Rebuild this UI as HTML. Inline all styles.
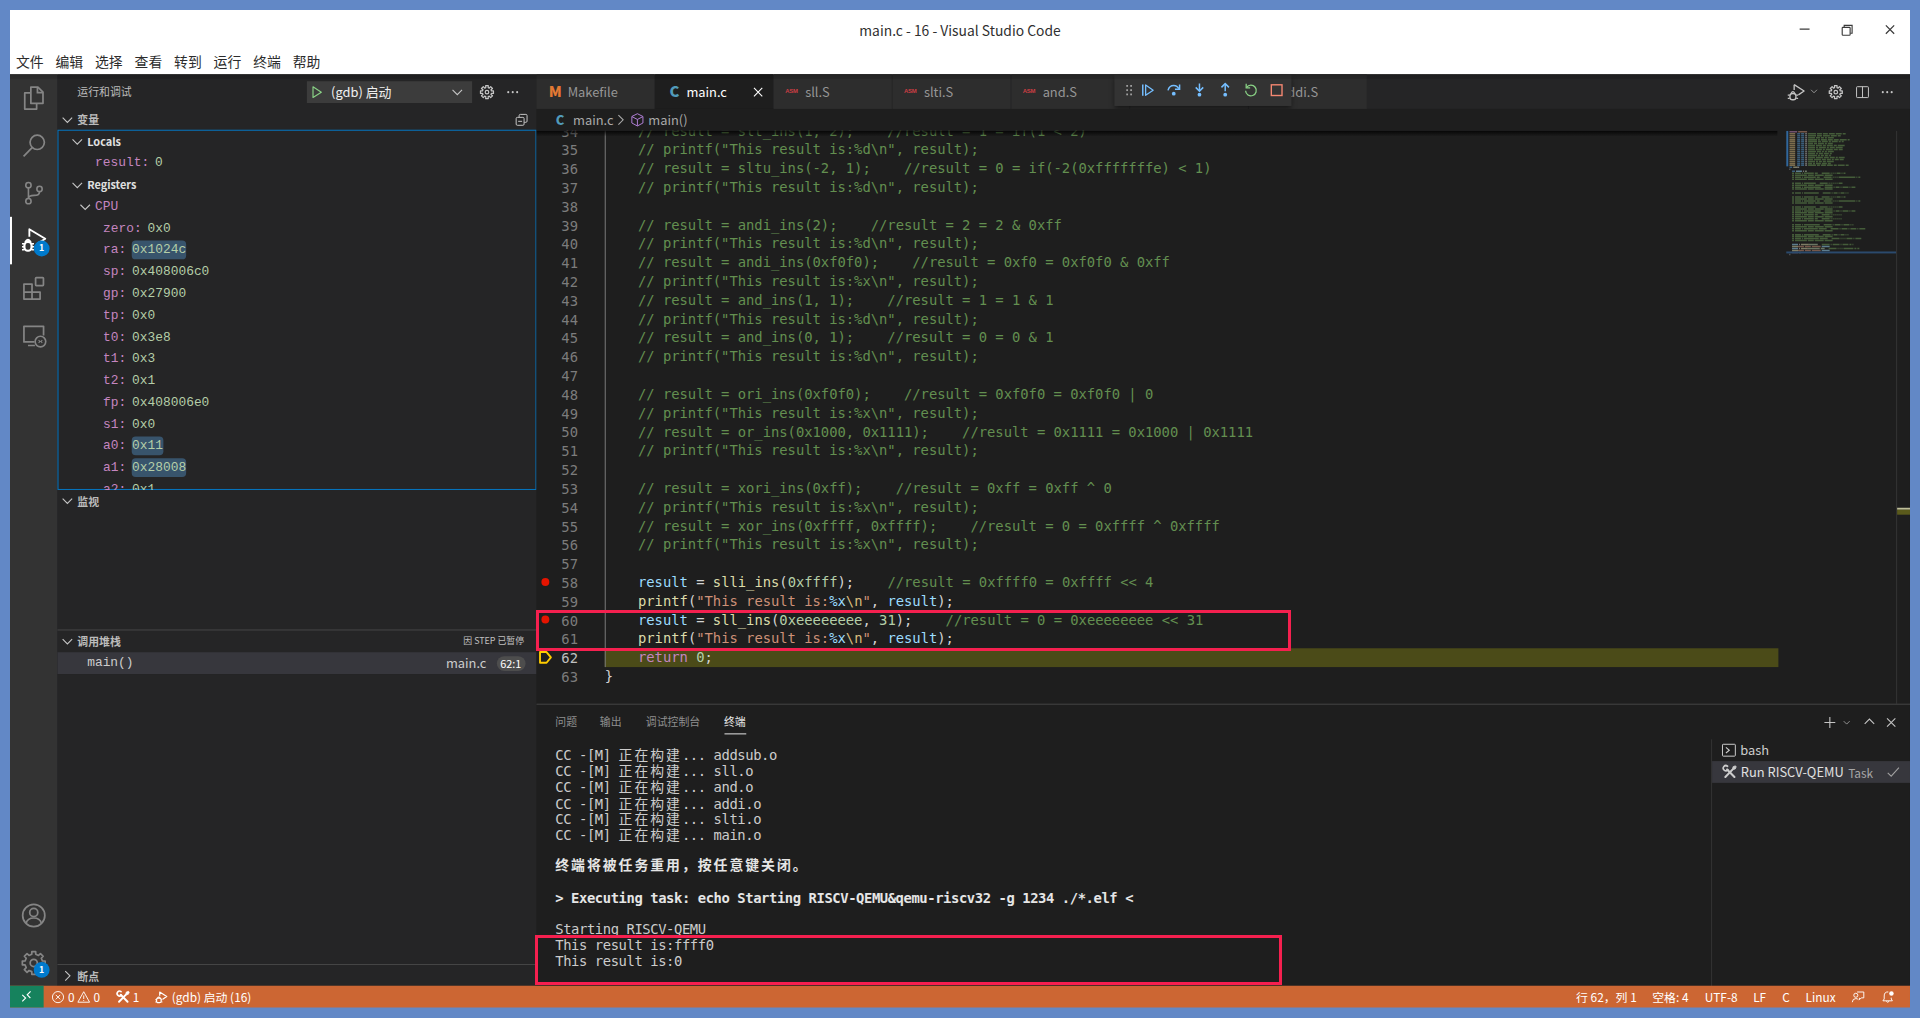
<!DOCTYPE html>
<html lang="zh-CN"><head><meta charset="utf-8"><title>main.c - 16 - Visual Studio Code</title>
<style>
html,body{margin:0;padding:0}
body{width:1920px;height:1018px;overflow:hidden;position:relative;background:#6288c6;font-family:'Noto Sans CJK SC','Liberation Sans',sans-serif}
#win{position:absolute;left:10px;top:10px;width:1920px;height:1008.3px;transform:scale(0.989583);transform-origin:0 0;overflow:hidden}
#win div{box-sizing:border-box}
.rr{position:absolute;border:3px solid #f5204f;box-sizing:border-box}
</style></head>
<body>
<div id="win">
<div style="position:absolute;left:0px;top:30px;width:1920px;height:970px;background:#252526;"></div>
<div style="position:absolute;left:0px;top:0px;width:1920px;height:65px;background:#ffffff;"></div>
<div style="position:absolute;left:0;top:0;width:1920px;height:40px;text-align:center;font:14px/40px 'Noto Sans CJK SC','Liberation Sans',sans-serif;color:#303030">main.c - 16 - Visual Studio Code</div>
<svg width="120" height="40" viewBox="0 0 120 40" style="position:absolute;left:1800px;top:0" fill="none" stroke="#3a3a3a" stroke-width="1.15"><path d="M8.5 19.3 H18.5"/><rect x="51.5" y="17.5" width="8" height="8" rx="0.8"/><path d="M53.5 17.3 V15.5 H61.5 V23.5 H59.7"/><path d="M95.6 15.6 L104 24 M104 15.6 L95.6 24" stroke-width="1.25"/></svg>
<div style="position:absolute;left:6.0px;top:40.4px;font:14px/25px 'Noto Sans CJK SC','Liberation Sans',sans-serif;color:#2c2c2c;white-space:pre;">文件</div>
<div style="position:absolute;left:45.95px;top:40.4px;font:14px/25px 'Noto Sans CJK SC','Liberation Sans',sans-serif;color:#2c2c2c;white-space:pre;">编辑</div>
<div style="position:absolute;left:85.9px;top:40.4px;font:14px/25px 'Noto Sans CJK SC','Liberation Sans',sans-serif;color:#2c2c2c;white-space:pre;">选择</div>
<div style="position:absolute;left:125.85000000000001px;top:40.4px;font:14px/25px 'Noto Sans CJK SC','Liberation Sans',sans-serif;color:#2c2c2c;white-space:pre;">查看</div>
<div style="position:absolute;left:165.8px;top:40.4px;font:14px/25px 'Noto Sans CJK SC','Liberation Sans',sans-serif;color:#2c2c2c;white-space:pre;">转到</div>
<div style="position:absolute;left:205.75px;top:40.4px;font:14px/25px 'Noto Sans CJK SC','Liberation Sans',sans-serif;color:#2c2c2c;white-space:pre;">运行</div>
<div style="position:absolute;left:245.70000000000002px;top:40.4px;font:14px/25px 'Noto Sans CJK SC','Liberation Sans',sans-serif;color:#2c2c2c;white-space:pre;">终端</div>
<div style="position:absolute;left:285.65000000000003px;top:40.4px;font:14px/25px 'Noto Sans CJK SC','Liberation Sans',sans-serif;color:#2c2c2c;white-space:pre;">帮助</div>
<div style="position:absolute;left:0px;top:65px;width:48px;height:921.5px;background:#333333;"></div>
<svg viewBox="0 0 24 24" width="28" height="28" style="position:absolute;color:#858585;left:10px;top:75px;" fill="none" stroke="currentColor"><path d="M9.5 2.5 H15.6 L20 6.9 V16.5 H9.5 Z" stroke-width="1.5" stroke-linejoin="round"/><path d="M15.2 2.8 V7.3 H19.8" stroke-width="1.5"/><path d="M9.3 7.5 H4.2 V21.5 H14.5 V16.8" stroke-width="1.5" stroke-linejoin="round"/></svg>
<svg viewBox="0 0 24 24" width="28" height="28" style="position:absolute;color:#858585;left:10px;top:123px;" fill="none" stroke="currentColor"><circle cx="15" cy="9.2" r="6.2" stroke-width="1.5"/><path d="M10.6 13.8 L3.2 21.4" stroke-width="1.5"/></svg>
<svg viewBox="0 0 24 24" width="28" height="28" style="position:absolute;color:#858585;left:10px;top:171px;" fill="none" stroke="currentColor"><circle cx="7.4" cy="5.2" r="2.3" stroke-width="1.4"/><circle cx="7.4" cy="19" r="2.3" stroke-width="1.4"/><circle cx="17" cy="8.4" r="2.3" stroke-width="1.4"/><path d="M7.4 7.6 V16.6 M17 10.8 Q17 14 12.4 14 Q7.6 14 7.4 16.6" stroke-width="1.4"/></svg>
<svg viewBox="0 0 24 24" width="28" height="28" style="position:absolute;color:#ffffff;left:10px;top:219px;" fill="none" stroke="currentColor"><path d="M8.2 8.6 V2.2 L22 10.4 L15 14.8" stroke-width="1.6" stroke-linejoin="round"/><rect x="3.9" y="13.2" width="6.2" height="7.6" rx="2.9" stroke-width="1.9"/><path d="M4.6 13.4 Q7 9.2 9.4 13.4" stroke-width="1.7"/><path d="M1.8 14.8 H3.6 M1.8 17.4 H3.6 M1.8 20 H3.8 M10.4 14.8 H12.2 M10.4 17.4 H12.2 M10.2 20 H12.2" stroke-width="1.2"/></svg>
<svg viewBox="0 0 24 24" width="28" height="28" style="position:absolute;color:#858585;left:10px;top:267px;" fill="none" stroke="currentColor"><path d="M3.5 8.5 H10.5 V15.5 H17.5 V21.5 H3.5 Z M10.5 15.5 V21.5 M3.5 15.5 H10.5" stroke-width="1.5" stroke-linejoin="round"/><rect x="13.6" y="3" width="6.8" height="6.8" rx="0.6" stroke-width="1.5"/></svg>
<svg viewBox="0 0 24 24" width="28" height="28" style="position:absolute;color:#858585;left:10px;top:315px;" fill="none" stroke="currentColor"><path d="M12.6 17.5 H3.5 V4 H20.5 V12" stroke-width="1.5" stroke-linejoin="round"/><path d="M7 20.6 H13" stroke-width="1.5"/><circle cx="17.8" cy="17.2" r="4.6" stroke-width="1.4"/><path d="M16.2 16 L17.4 17.2 L16.2 18.4 M19.4 16 L18.2 17.2 L19.4 18.4" stroke-width="0.9"/></svg>
<div style="position:absolute;left:0px;top:209px;width:2px;height:48px;background:#ffffff;"></div>
<div style="position:absolute;left:24px;top:233px;width:16px;height:16px;background:#007acc;border-radius:8px;color:#fff;font:bold 9px/16px 'Noto Sans CJK SC','Liberation Sans',sans-serif;text-align:center">1</div>
<svg viewBox="0 0 24 24" width="28" height="28" style="position:absolute;color:#858585;left:10px;top:900.8px;" fill="none" stroke="currentColor"><circle cx="12" cy="12" r="9.6" stroke-width="1.5"/><circle cx="12" cy="9.4" r="3.5" stroke-width="1.5"/><path d="M5.4 18.8 Q6.6 14.2 12 14.2 Q17.4 14.2 18.6 18.8" stroke-width="1.5"/></svg>
<svg viewBox="0 0 24 24" width="28" height="28" style="position:absolute;color:#858585;left:10px;top:948.8px;" fill="none" stroke="currentColor"><path d="M21.86 10.36 L21.86 13.64 L19.50 13.74 L18.53 16.07 L20.14 17.81 L17.81 20.14 L16.07 18.53 L13.74 19.50 L13.64 21.86 L10.36 21.86 L10.26 19.50 L7.93 18.53 L6.19 20.14 L3.86 17.81 L5.47 16.07 L4.50 13.74 L2.14 13.64 L2.14 10.36 L4.50 10.26 L5.47 7.93 L3.86 6.19 L6.19 3.86 L7.93 5.47 L10.26 4.50 L10.36 2.14 L13.64 2.14 L13.74 4.50 L16.07 5.47 L17.81 3.86 L20.14 6.19 L18.53 7.93 L19.50 10.26Z" stroke-width="1.5" stroke-linejoin="round"/><circle cx="12" cy="12" r="3.1" stroke-width="1.5"/></svg>
<div style="position:absolute;left:24px;top:962px;width:16px;height:16px;background:#007acc;border-radius:8px;color:#fff;font:bold 9px/16px 'Noto Sans CJK SC','Liberation Sans',sans-serif;text-align:center">1</div>
<div style="position:absolute;left:48px;top:65px;width:483.5px;height:921.5px;background:#252526;"></div>
<div style="position:absolute;left:68px;top:65px;font:11px/35px 'Noto Sans CJK SC','Liberation Sans',sans-serif;color:#bbbbbb;white-space:pre;">运行和调试</div>
<div style="position:absolute;left:300px;top:71.5px;width:167px;height:22px;background:#3c3c3c;"></div>
<svg viewBox="0 0 16 16" width="16" height="16" style="position:absolute;color:#89d185;left:301.5px;top:74.5px;" fill="none" stroke="currentColor"><path d="M4.2 2.6 L12.6 8 L4.2 13.4 Z" stroke-width="1.2" stroke-linejoin="round"/></svg>
<div style="position:absolute;left:324.5px;top:71.5px;font:13px/22px 'Noto Sans CJK SC','Liberation Sans',sans-serif;color:#f0f0f0;white-space:pre;">(gdb) 启动</div>
<svg viewBox="0 0 16 16" width="16" height="16" style="position:absolute;color:#c5c5c5;left:444px;top:74.5px;" fill="none" stroke="currentColor"><path d="M3.2 5.8 L8 10.6 L12.8 5.8" stroke-width="1.1"/></svg>
<svg viewBox="0 0 16 16" width="16" height="16" style="position:absolute;color:#c5c5c5;left:474px;top:74.5px;" fill="none" stroke="currentColor"><path d="M14.57 6.69 L14.57 9.31 L12.54 9.20 L12.06 10.36 L13.57 11.72 L11.72 13.57 L10.36 12.06 L9.20 12.54 L9.31 14.57 L6.69 14.57 L6.80 12.54 L5.64 12.06 L4.28 13.57 L2.43 11.72 L3.94 10.36 L3.46 9.20 L1.43 9.31 L1.43 6.69 L3.46 6.80 L3.94 5.64 L2.43 4.28 L4.28 2.43 L5.64 3.94 L6.80 3.46 L6.69 1.43 L9.31 1.43 L9.20 3.46 L10.36 3.94 L11.72 2.43 L13.57 4.28 L12.06 5.64 L12.54 6.80Z" stroke-width="1.25" stroke-linejoin="round"/><circle cx="8" cy="8" r="1.8" stroke-width="1.25"/></svg>
<svg viewBox="0 0 16 16" width="16" height="16" style="position:absolute;color:#c5c5c5;left:499.5px;top:74.5px;" fill="none" stroke="currentColor"><g fill="currentColor" stroke="none"><circle cx="3.5" cy="8" r="1.05"/><circle cx="8" cy="8" r="1.05"/><circle cx="12.5" cy="8" r="1.05"/></g></svg>
<svg viewBox="0 0 16 16" width="16" height="16" style="position:absolute;color:#c5c5c5;left:50px;top:103px;" fill="none" stroke="currentColor"><path d="M3.2 5.8 L8 10.6 L12.8 5.8" stroke-width="1.1"/></svg><div style="position:absolute;left:68px;top:99px;font:11px/22px 'Noto Sans CJK SC','Liberation Sans',sans-serif;color:#bbbbbb;white-space:pre;font-weight:bold">变量</div>
<svg viewBox="0 0 16 16" width="16" height="16" style="position:absolute;color:#c5c5c5;left:509px;top:103px;" fill="none" stroke="currentColor"><rect x="2.5" y="5.5" width="8" height="8" rx="1.2" stroke-width="1"/><path d="M4.5 9.5 H8.5" stroke-width="1"/><path d="M5.5 5.3 V3.7 Q5.5 2.5 6.7 2.5 H12.3 Q13.5 2.5 13.5 3.7 V9.3 Q13.5 10.5 12.3 10.5 H10.7" stroke-width="1"/></svg>
<div style="position:absolute;left:48px;top:121.2px;width:483.5px;height:363.5px;overflow:hidden;outline:1.6px solid rgba(0,127,212,0.9);outline-offset:-1.3px"><svg viewBox="0 0 16 16" width="16" height="16" style="position:absolute;color:#c5c5c5;left:12px;top:3.8px;" fill="none" stroke="currentColor"><path d="M3.2 5.8 L8 10.6 L12.8 5.8" stroke-width="1.1"/></svg><div style="position:absolute;left:30px;top:-0.3999999999999999px;font:11px/22px 'Noto Sans CJK SC','Liberation Sans',sans-serif;color:#e0e0e0;white-space:pre;font-weight:bold">Locals</div><div style="position:absolute;left:38px;top:22.8px;font:13px/22px 'Liberation Mono','DejaVu Sans Mono',monospace;color:#ccc;white-space:pre;"><span style="color:#c586c0;margin-right:6px">result:</span><span style="color:#b5cea8">0</span></div><svg viewBox="0 0 16 16" width="16" height="16" style="position:absolute;color:#c5c5c5;left:12px;top:47.8px;" fill="none" stroke="currentColor"><path d="M3.2 5.8 L8 10.6 L12.8 5.8" stroke-width="1.1"/></svg><div style="position:absolute;left:30px;top:43.599999999999994px;font:11px/22px 'Noto Sans CJK SC','Liberation Sans',sans-serif;color:#e0e0e0;white-space:pre;font-weight:bold">Registers</div><svg viewBox="0 0 16 16" width="16" height="16" style="position:absolute;color:#c5c5c5;left:20px;top:69.8px;" fill="none" stroke="currentColor"><path d="M3.2 5.8 L8 10.6 L12.8 5.8" stroke-width="1.1"/></svg><div style="position:absolute;left:38px;top:66.8px;font:13px/22px 'Liberation Mono','DejaVu Sans Mono',monospace;color:#c586c0;white-space:pre;">CPU</div><div style="position:absolute;left:46px;top:88.8px;font:13px/22px 'Liberation Mono','DejaVu Sans Mono',monospace;color:#ccc;white-space:pre;"><span style="color:#c586c0;margin-right:6px">zero:</span><span style="color:#b5cea8">0x0</span></div><div style="position:absolute;left:46px;top:110.8px;font:13px/22px 'Liberation Mono','DejaVu Sans Mono',monospace;color:#ccc;white-space:pre;"><span style="color:#c586c0;margin-right:6px">ra:</span><span style="color:#b5cea8;background:rgba(86,156,214,0.4);border-radius:4px;padding:2px 0">0x1024c</span></div><div style="position:absolute;left:46px;top:132.8px;font:13px/22px 'Liberation Mono','DejaVu Sans Mono',monospace;color:#ccc;white-space:pre;"><span style="color:#c586c0;margin-right:6px">sp:</span><span style="color:#b5cea8">0x408006c0</span></div><div style="position:absolute;left:46px;top:154.8px;font:13px/22px 'Liberation Mono','DejaVu Sans Mono',monospace;color:#ccc;white-space:pre;"><span style="color:#c586c0;margin-right:6px">gp:</span><span style="color:#b5cea8">0x27900</span></div><div style="position:absolute;left:46px;top:176.8px;font:13px/22px 'Liberation Mono','DejaVu Sans Mono',monospace;color:#ccc;white-space:pre;"><span style="color:#c586c0;margin-right:6px">tp:</span><span style="color:#b5cea8">0x0</span></div><div style="position:absolute;left:46px;top:198.8px;font:13px/22px 'Liberation Mono','DejaVu Sans Mono',monospace;color:#ccc;white-space:pre;"><span style="color:#c586c0;margin-right:6px">t0:</span><span style="color:#b5cea8">0x3e8</span></div><div style="position:absolute;left:46px;top:220.8px;font:13px/22px 'Liberation Mono','DejaVu Sans Mono',monospace;color:#ccc;white-space:pre;"><span style="color:#c586c0;margin-right:6px">t1:</span><span style="color:#b5cea8">0x3</span></div><div style="position:absolute;left:46px;top:242.8px;font:13px/22px 'Liberation Mono','DejaVu Sans Mono',monospace;color:#ccc;white-space:pre;"><span style="color:#c586c0;margin-right:6px">t2:</span><span style="color:#b5cea8">0x1</span></div><div style="position:absolute;left:46px;top:264.8px;font:13px/22px 'Liberation Mono','DejaVu Sans Mono',monospace;color:#ccc;white-space:pre;"><span style="color:#c586c0;margin-right:6px">fp:</span><span style="color:#b5cea8">0x408006e0</span></div><div style="position:absolute;left:46px;top:286.8px;font:13px/22px 'Liberation Mono','DejaVu Sans Mono',monospace;color:#ccc;white-space:pre;"><span style="color:#c586c0;margin-right:6px">s1:</span><span style="color:#b5cea8">0x0</span></div><div style="position:absolute;left:46px;top:308.8px;font:13px/22px 'Liberation Mono','DejaVu Sans Mono',monospace;color:#ccc;white-space:pre;"><span style="color:#c586c0;margin-right:6px">a0:</span><span style="color:#b5cea8;background:rgba(86,156,214,0.4);border-radius:4px;padding:2px 0">0x11</span></div><div style="position:absolute;left:46px;top:330.8px;font:13px/22px 'Liberation Mono','DejaVu Sans Mono',monospace;color:#ccc;white-space:pre;"><span style="color:#c586c0;margin-right:6px">a1:</span><span style="color:#b5cea8;background:rgba(86,156,214,0.4);border-radius:4px;padding:2px 0">0x28008</span></div><div style="position:absolute;left:46px;top:352.8px;font:13px/22px 'Liberation Mono','DejaVu Sans Mono',monospace;color:#ccc;white-space:pre;"><span style="color:#c586c0;margin-right:6px">a2:</span><span style="color:#b5cea8">0x1</span></div></div>
<svg viewBox="0 0 16 16" width="16" height="16" style="position:absolute;color:#c5c5c5;left:50px;top:488.1px;" fill="none" stroke="currentColor"><path d="M3.2 5.8 L8 10.6 L12.8 5.8" stroke-width="1.1"/></svg><div style="position:absolute;left:68px;top:485.1px;font:11px/22px 'Noto Sans CJK SC','Liberation Sans',sans-serif;color:#bbbbbb;white-space:pre;font-weight:bold">监视</div>
<div style="position:absolute;left:48px;top:625.8px;width:483.5px;height:1px;background:rgba(204,204,204,0.2);"></div><svg viewBox="0 0 16 16" width="16" height="16" style="position:absolute;color:#c5c5c5;left:50px;top:629.5px;" fill="none" stroke="currentColor"><path d="M3.2 5.8 L8 10.6 L12.8 5.8" stroke-width="1.1"/></svg><div style="position:absolute;left:68px;top:626.5px;font:11px/22px 'Noto Sans CJK SC','Liberation Sans',sans-serif;color:#bbbbbb;white-space:pre;font-weight:bold">调用堆栈</div>
<div style="position:absolute;left:458px;top:627.3px;font:9px/22px 'Noto Sans CJK SC','Liberation Sans',sans-serif;color:#c0c0c0;white-space:pre;">因 STEP 已暂停</div>
<div style="position:absolute;left:48px;top:648.5px;width:483.5px;height:22px;background:#37373d;"></div>
<div style="position:absolute;left:78px;top:648.5px;font:13px/22px 'Liberation Mono','DejaVu Sans Mono',monospace;color:#cccccc;white-space:pre;">main()</div>
<div style="position:absolute;left:440.5px;top:648.5px;font:13px/22px 'Noto Sans CJK SC','Liberation Sans',sans-serif;color:#cccccc;white-space:pre;">main.c</div>
<div style="position:absolute;left:491.5px;top:652.5px;width:29px;height:15px;background:#4d4d4d;border-radius:8px;font:11px/15px 'Noto Sans CJK SC','Liberation Sans',sans-serif;color:#fff;text-align:center">62:1</div>
<div style="position:absolute;left:48px;top:963.8px;width:483.5px;height:1px;background:rgba(204,204,204,0.2);"></div><svg viewBox="0 0 16 16" width="16" height="16" style="position:absolute;color:#c5c5c5;left:50px;top:968.0px;" fill="none" stroke="currentColor"><path d="M5.8 3.2 L10.6 8 L5.8 12.8" stroke-width="1.1"/></svg><div style="position:absolute;left:68px;top:965.0px;font:11px/22px 'Noto Sans CJK SC','Liberation Sans',sans-serif;color:#bbbbbb;white-space:pre;font-weight:bold">断点</div>
<div style="position:absolute;left:531.5px;top:65px;width:1388.5px;height:35px;background:#252526;"></div>
<div style="position:absolute;left:531.5px;top:65px;width:119px;height:35px;background:#2d2d2d;"></div>
<div style="position:absolute;left:544.5px;top:65px;font:15px/34px 'Noto Sans CJK SC','Liberation Sans',sans-serif;color:#e37933;white-space:pre;font-weight:900">M</div>
<div style="position:absolute;left:563.5px;top:65px;font:13px/35px 'Noto Sans CJK SC','Liberation Sans',sans-serif;color:#969696;white-space:pre;">Makefile</div>
<div style="position:absolute;left:651.5px;top:65px;width:119px;height:35px;background:#1e1e1e;"></div>
<div style="position:absolute;left:666.5px;top:65px;font:15px/34px 'Noto Sans CJK SC','Liberation Sans',sans-serif;color:#519aba;white-space:pre;font-weight:900">C</div>
<div style="position:absolute;left:683.5px;top:65px;font:13px/35px 'Noto Sans CJK SC','Liberation Sans',sans-serif;color:#ffffff;white-space:pre;">main.c</div>
<svg viewBox="0 0 16 16" width="16" height="16" style="position:absolute;color:#ffffff;left:747.5px;top:75px;" fill="none" stroke="currentColor"><path d="M3.8 3.8 L12.2 12.2 M12.2 3.8 L3.8 12.2" stroke-width="1.1"/></svg>
<div style="position:absolute;left:771.5px;top:65px;width:119px;height:35px;background:#2d2d2d;"></div>
<div style="position:absolute;left:783.5px;top:65px;font:6px/35px 'Liberation Sans',sans-serif;color:#cc3e44;white-space:pre;font-weight:bold;letter-spacing:-0.3px">ASM</div>
<div style="position:absolute;left:803.5px;top:65px;font:13px/35px 'Noto Sans CJK SC','Liberation Sans',sans-serif;color:#969696;white-space:pre;">sll.S</div>
<div style="position:absolute;left:891.5px;top:65px;width:119px;height:35px;background:#2d2d2d;"></div>
<div style="position:absolute;left:903.5px;top:65px;font:6px/35px 'Liberation Sans',sans-serif;color:#cc3e44;white-space:pre;font-weight:bold;letter-spacing:-0.3px">ASM</div>
<div style="position:absolute;left:923.5px;top:65px;font:13px/35px 'Noto Sans CJK SC','Liberation Sans',sans-serif;color:#969696;white-space:pre;">slti.S</div>
<div style="position:absolute;left:1011.5px;top:65px;width:119px;height:35px;background:#2d2d2d;"></div>
<div style="position:absolute;left:1023.5px;top:65px;font:6px/35px 'Liberation Sans',sans-serif;color:#cc3e44;white-space:pre;font-weight:bold;letter-spacing:-0.3px">ASM</div>
<div style="position:absolute;left:1043.5px;top:65px;font:13px/35px 'Noto Sans CJK SC','Liberation Sans',sans-serif;color:#969696;white-space:pre;">and.S</div>
<div style="position:absolute;left:1131.5px;top:65px;width:119px;height:35px;background:#2d2d2d;"></div>
<div style="position:absolute;left:1143.5px;top:65px;font:6px/35px 'Liberation Sans',sans-serif;color:#cc3e44;white-space:pre;font-weight:bold;letter-spacing:-0.3px">ASM</div>
<div style="position:absolute;left:1163.5px;top:65px;font:13px/35px 'Noto Sans CJK SC','Liberation Sans',sans-serif;color:#969696;white-space:pre;">addsub.S</div>
<div style="position:absolute;left:1251.5px;top:65px;width:119px;height:35px;background:#2d2d2d;"></div>
<div style="position:absolute;left:1263.5px;top:65px;font:6px/35px 'Liberation Sans',sans-serif;color:#cc3e44;white-space:pre;font-weight:bold;letter-spacing:-0.3px">ASM</div>
<div style="position:absolute;left:1283.5px;top:65px;font:13px/35px 'Noto Sans CJK SC','Liberation Sans',sans-serif;color:#969696;white-space:pre;">addi.S</div>
<svg viewBox="0 0 16 16" width="22" height="22" style="position:absolute;color:#c5c5c5;left:1793.6px;top:71.6px;" fill="none" stroke="currentColor"><path d="M6.5 2.5 L13.8 7.2 L9.6 10" stroke-width="0.95" stroke-linejoin="round"/><path d="M6.5 2.5 V6.4" stroke-width="0.95"/><rect x="3.4" y="9" width="4.4" height="4.6" rx="1.9" stroke-width="1"/><path d="M4.2 9 Q5.6 6.4 7 9" stroke-width="0.95"/><path d="M1.8 10.2 H3.2 M1.8 12.6 H3.2 M8 10.2 H9.4 M8 12.6 H9.4" stroke-width="0.8"/></svg>
<svg viewBox="0 0 16 16" width="10" height="10" style="position:absolute;color:#c5c5c5;left:1817.7px;top:77.4px;" fill="none" stroke="currentColor"><path d="M3.2 5.8 L8 10.6 L12.8 5.8" stroke-width="1.1"/></svg>
<svg viewBox="0 0 16 16" width="16" height="16" style="position:absolute;color:#c5c5c5;left:1837px;top:74.5px;" fill="none" stroke="currentColor"><path d="M14.57 6.69 L14.57 9.31 L12.54 9.20 L12.06 10.36 L13.57 11.72 L11.72 13.57 L10.36 12.06 L9.20 12.54 L9.31 14.57 L6.69 14.57 L6.80 12.54 L5.64 12.06 L4.28 13.57 L2.43 11.72 L3.94 10.36 L3.46 9.20 L1.43 9.31 L1.43 6.69 L3.46 6.80 L3.94 5.64 L2.43 4.28 L4.28 2.43 L5.64 3.94 L6.80 3.46 L6.69 1.43 L9.31 1.43 L9.20 3.46 L10.36 3.94 L11.72 2.43 L13.57 4.28 L12.06 5.64 L12.54 6.80Z" stroke-width="1.25" stroke-linejoin="round"/><circle cx="8" cy="8" r="1.8" stroke-width="1.25"/></svg>
<svg viewBox="0 0 16 16" width="16" height="16" style="position:absolute;color:#c5c5c5;left:1863.5px;top:74.5px;" fill="none" stroke="currentColor"><rect x="2" y="2.5" width="12" height="11" rx="0.8" stroke-width="1"/><path d="M8 2.5 V13.5" stroke-width="1"/></svg>
<svg viewBox="0 0 16 16" width="16" height="16" style="position:absolute;color:#c5c5c5;left:1889px;top:74.5px;" fill="none" stroke="currentColor"><g fill="currentColor" stroke="none"><circle cx="3.5" cy="8" r="1.05"/><circle cx="8" cy="8" r="1.05"/><circle cx="12.5" cy="8" r="1.05"/></g></svg>
<div style="position:absolute;left:1115.8px;top:65px;width:179.6px;height:32px;background:#333333;box-shadow:0 3px 5px -1px rgba(0,0,0,0.55)"></div>
<svg viewBox="0 0 16 16" width="16" height="16" style="position:absolute;color:#a0a0a0;left:1123px;top:73px;" fill="none" stroke="currentColor"><g fill="currentColor" stroke="none"><rect x="5" y="2.8" width="1.8" height="1.8"/><rect x="5" y="7.1" width="1.8" height="1.8"/><rect x="5" y="11.4" width="1.8" height="1.8"/><rect x="9" y="2.8" width="1.8" height="1.8"/><rect x="9" y="7.1" width="1.8" height="1.8"/><rect x="9" y="11.4" width="1.8" height="1.8"/></g></svg>
<svg viewBox="0 0 16 16" width="16" height="16" style="position:absolute;color:#75beff;left:1142px;top:73px;" fill="none" stroke="currentColor"><path d="M2.7 2.4 V13.6" stroke-width="1.5"/><path d="M5.6 2.8 L13.2 8 L5.6 13.2 Z" stroke-width="1.3" stroke-linejoin="round"/></svg>
<svg viewBox="0 0 16 16" width="16" height="16" style="position:absolute;color:#75beff;left:1168px;top:73px;" fill="none" stroke="currentColor"><path d="M2.2 8.2 Q3.4 3.2 8 3.2 Q11.6 3.2 13.2 6.6" stroke-width="1.5"/><path d="M13.9 2.4 V7.2 H9.2" stroke-width="1.5" stroke-linejoin="miter"/><circle cx="8" cy="11.6" r="1.9" fill="currentColor" stroke="none"/></svg>
<svg viewBox="0 0 16 16" width="16" height="16" style="position:absolute;color:#75beff;left:1194px;top:73px;" fill="none" stroke="currentColor"><path d="M8 1.2 V8.6" stroke-width="1.5"/><path d="M4.2 5.2 L8 9 L11.8 5.2" stroke-width="1.5"/><circle cx="8" cy="12.6" r="1.9" fill="currentColor" stroke="none"/></svg>
<svg viewBox="0 0 16 16" width="16" height="16" style="position:absolute;color:#75beff;left:1220px;top:73px;" fill="none" stroke="currentColor"><path d="M8 9.2 V1.8" stroke-width="1.5"/><path d="M4.2 5.2 L8 1.4 L11.8 5.2" stroke-width="1.5"/><circle cx="8" cy="12.6" r="1.9" fill="currentColor" stroke="none"/></svg>
<svg viewBox="0 0 16 16" width="16" height="16" style="position:absolute;color:#89d185;left:1246px;top:73px;" fill="none" stroke="currentColor"><path d="M3.6 5.2 A5.4 5.4 0 1 1 2.6 8.6" stroke-width="1.3"/><path d="M3.2 1.6 V5.6 H7.2" stroke-width="1.3"/></svg>
<svg viewBox="0 0 16 16" width="16" height="16" style="position:absolute;color:#f48771;left:1272px;top:73px;" fill="none" stroke="currentColor"><rect x="2.6" y="2.6" width="10.8" height="10.8" stroke-width="1.4"/></svg>
<div style="position:absolute;left:0px;top:65px;width:1920px;height:4.5px;background:linear-gradient(rgba(0,0,0,0.22),rgba(0,0,0,0.12))"></div>
<div style="position:absolute;left:531.5px;top:100px;width:1388.5px;height:22px;background:#1e1e1e;"></div>
<div style="position:absolute;left:551.5px;top:100px;font:13px/21px 'Noto Sans CJK SC','Liberation Sans',sans-serif;color:#519aba;white-space:pre;font-weight:900">C</div>
<div style="position:absolute;left:569.0px;top:100px;font:13px/22px 'Noto Sans CJK SC','Liberation Sans',sans-serif;color:#a9a9a9;white-space:pre;">main.c</div>
<svg viewBox="0 0 16 16" width="16" height="16" style="position:absolute;color:#a9a9a9;left:609.0px;top:103px;" fill="none" stroke="currentColor"><path d="M5.8 3.2 L10.6 8 L5.8 12.8" stroke-width="1.1"/></svg>
<svg viewBox="0 0 16 16" width="16" height="16" style="position:absolute;color:#b180d7;left:626.0px;top:103px;" fill="none" stroke="currentColor"><path d="M8 1.8 L13.6 4.6 V11.2 L8 14.2 L2.4 11.2 V4.6 Z" stroke-width="1" stroke-linejoin="round"/><path d="M2.6 4.8 L8 7.6 L13.4 4.8 M8 7.6 V14" stroke-width="1"/></svg>
<div style="position:absolute;left:645.0px;top:100px;font:13px/22px 'Noto Sans CJK SC','Liberation Sans',sans-serif;color:#a9a9a9;white-space:pre;">main()</div>
<div style="position:absolute;left:531.5px;top:122px;width:1388.5px;height:579.5px;background:#1e1e1e;overflow:hidden"><div style="position:absolute;left:69.5px;top:522.5px;width:1185.5px;height:19px;background:#4b4b18;"></div><div style="position:absolute;left:69.5px;top:0px;width:1px;height:541.5px;background:#7a7a7a;"></div><div style="position:absolute;left:0;top:-7.8999999999999995px;width:42.5px;text-align:right;font:14px/19px 'DejaVu Sans Mono','Liberation Mono',monospace;color:#7c7c7c">34</div><div style="position:absolute;left:69.5px;top:-8.7px;font:14px/19px 'DejaVu Sans Mono','Liberation Mono',monospace;letter-spacing:-0.03px;white-space:pre;color:#d4d4d4"><span style="color:#638f50">    // result = slt_ins(1, 2);    //result = 1 = if(1 &lt; 2)</span></div><div style="position:absolute;left:0;top:11.100000000000001px;width:42.5px;text-align:right;font:14px/19px 'DejaVu Sans Mono','Liberation Mono',monospace;color:#7c7c7c">35</div><div style="position:absolute;left:69.5px;top:10.3px;font:14px/19px 'DejaVu Sans Mono','Liberation Mono',monospace;letter-spacing:-0.03px;white-space:pre;color:#d4d4d4"><span style="color:#638f50">    // printf("This result is:%d\n", result);</span></div><div style="position:absolute;left:0;top:30.1px;width:42.5px;text-align:right;font:14px/19px 'DejaVu Sans Mono','Liberation Mono',monospace;color:#7c7c7c">36</div><div style="position:absolute;left:69.5px;top:29.3px;font:14px/19px 'DejaVu Sans Mono','Liberation Mono',monospace;letter-spacing:-0.03px;white-space:pre;color:#d4d4d4"><span style="color:#638f50">    // result = sltu_ins(-2, 1);    //result = 0 = if(-2(0xfffffffe) &lt; 1)</span></div><div style="position:absolute;left:0;top:49.099999999999994px;width:42.5px;text-align:right;font:14px/19px 'DejaVu Sans Mono','Liberation Mono',monospace;color:#7c7c7c">37</div><div style="position:absolute;left:69.5px;top:48.3px;font:14px/19px 'DejaVu Sans Mono','Liberation Mono',monospace;letter-spacing:-0.03px;white-space:pre;color:#d4d4d4"><span style="color:#638f50">    // printf("This result is:%d\n", result);</span></div><div style="position:absolute;left:0;top:68.1px;width:42.5px;text-align:right;font:14px/19px 'DejaVu Sans Mono','Liberation Mono',monospace;color:#7c7c7c">38</div><div style="position:absolute;left:69.5px;top:67.3px;font:14px/19px 'DejaVu Sans Mono','Liberation Mono',monospace;letter-spacing:-0.03px;white-space:pre;color:#d4d4d4"><span style="color:#638f50"></span></div><div style="position:absolute;left:0;top:87.1px;width:42.5px;text-align:right;font:14px/19px 'DejaVu Sans Mono','Liberation Mono',monospace;color:#7c7c7c">39</div><div style="position:absolute;left:69.5px;top:86.3px;font:14px/19px 'DejaVu Sans Mono','Liberation Mono',monospace;letter-spacing:-0.03px;white-space:pre;color:#d4d4d4"><span style="color:#638f50">    // result = andi_ins(2);    //result = 2 = 2 &amp; 0xff</span></div><div style="position:absolute;left:0;top:106.1px;width:42.5px;text-align:right;font:14px/19px 'DejaVu Sans Mono','Liberation Mono',monospace;color:#7c7c7c">40</div><div style="position:absolute;left:69.5px;top:105.3px;font:14px/19px 'DejaVu Sans Mono','Liberation Mono',monospace;letter-spacing:-0.03px;white-space:pre;color:#d4d4d4"><span style="color:#638f50">    // printf("This result is:%d\n", result);</span></div><div style="position:absolute;left:0;top:125.1px;width:42.5px;text-align:right;font:14px/19px 'DejaVu Sans Mono','Liberation Mono',monospace;color:#7c7c7c">41</div><div style="position:absolute;left:69.5px;top:124.3px;font:14px/19px 'DejaVu Sans Mono','Liberation Mono',monospace;letter-spacing:-0.03px;white-space:pre;color:#d4d4d4"><span style="color:#638f50">    // result = andi_ins(0xf0f0);    //result = 0xf0 = 0xf0f0 &amp; 0xff</span></div><div style="position:absolute;left:0;top:144.10000000000002px;width:42.5px;text-align:right;font:14px/19px 'DejaVu Sans Mono','Liberation Mono',monospace;color:#7c7c7c">42</div><div style="position:absolute;left:69.5px;top:143.3px;font:14px/19px 'DejaVu Sans Mono','Liberation Mono',monospace;letter-spacing:-0.03px;white-space:pre;color:#d4d4d4"><span style="color:#638f50">    // printf("This result is:%x\n", result);</span></div><div style="position:absolute;left:0;top:163.10000000000002px;width:42.5px;text-align:right;font:14px/19px 'DejaVu Sans Mono','Liberation Mono',monospace;color:#7c7c7c">43</div><div style="position:absolute;left:69.5px;top:162.3px;font:14px/19px 'DejaVu Sans Mono','Liberation Mono',monospace;letter-spacing:-0.03px;white-space:pre;color:#d4d4d4"><span style="color:#638f50">    // result = and_ins(1, 1);    //result = 1 = 1 &amp; 1</span></div><div style="position:absolute;left:0;top:182.10000000000002px;width:42.5px;text-align:right;font:14px/19px 'DejaVu Sans Mono','Liberation Mono',monospace;color:#7c7c7c">44</div><div style="position:absolute;left:69.5px;top:181.3px;font:14px/19px 'DejaVu Sans Mono','Liberation Mono',monospace;letter-spacing:-0.03px;white-space:pre;color:#d4d4d4"><span style="color:#638f50">    // printf("This result is:%d\n", result);</span></div><div style="position:absolute;left:0;top:201.10000000000002px;width:42.5px;text-align:right;font:14px/19px 'DejaVu Sans Mono','Liberation Mono',monospace;color:#7c7c7c">45</div><div style="position:absolute;left:69.5px;top:200.3px;font:14px/19px 'DejaVu Sans Mono','Liberation Mono',monospace;letter-spacing:-0.03px;white-space:pre;color:#d4d4d4"><span style="color:#638f50">    // result = and_ins(0, 1);    //result = 0 = 0 &amp; 1</span></div><div style="position:absolute;left:0;top:220.10000000000002px;width:42.5px;text-align:right;font:14px/19px 'DejaVu Sans Mono','Liberation Mono',monospace;color:#7c7c7c">46</div><div style="position:absolute;left:69.5px;top:219.3px;font:14px/19px 'DejaVu Sans Mono','Liberation Mono',monospace;letter-spacing:-0.03px;white-space:pre;color:#d4d4d4"><span style="color:#638f50">    // printf("This result is:%d\n", result);</span></div><div style="position:absolute;left:0;top:239.10000000000002px;width:42.5px;text-align:right;font:14px/19px 'DejaVu Sans Mono','Liberation Mono',monospace;color:#7c7c7c">47</div><div style="position:absolute;left:69.5px;top:238.3px;font:14px/19px 'DejaVu Sans Mono','Liberation Mono',monospace;letter-spacing:-0.03px;white-space:pre;color:#d4d4d4"><span style="color:#638f50"></span></div><div style="position:absolute;left:0;top:258.1px;width:42.5px;text-align:right;font:14px/19px 'DejaVu Sans Mono','Liberation Mono',monospace;color:#7c7c7c">48</div><div style="position:absolute;left:69.5px;top:257.3px;font:14px/19px 'DejaVu Sans Mono','Liberation Mono',monospace;letter-spacing:-0.03px;white-space:pre;color:#d4d4d4"><span style="color:#638f50">    // result = ori_ins(0xf0f0);    //result = 0xf0f0 = 0xf0f0 | 0</span></div><div style="position:absolute;left:0;top:277.1px;width:42.5px;text-align:right;font:14px/19px 'DejaVu Sans Mono','Liberation Mono',monospace;color:#7c7c7c">49</div><div style="position:absolute;left:69.5px;top:276.3px;font:14px/19px 'DejaVu Sans Mono','Liberation Mono',monospace;letter-spacing:-0.03px;white-space:pre;color:#d4d4d4"><span style="color:#638f50">    // printf("This result is:%x\n", result);</span></div><div style="position:absolute;left:0;top:296.1px;width:42.5px;text-align:right;font:14px/19px 'DejaVu Sans Mono','Liberation Mono',monospace;color:#7c7c7c">50</div><div style="position:absolute;left:69.5px;top:295.3px;font:14px/19px 'DejaVu Sans Mono','Liberation Mono',monospace;letter-spacing:-0.03px;white-space:pre;color:#d4d4d4"><span style="color:#638f50">    // result = or_ins(0x1000, 0x1111);    //result = 0x1111 = 0x1000 | 0x1111</span></div><div style="position:absolute;left:0;top:315.1px;width:42.5px;text-align:right;font:14px/19px 'DejaVu Sans Mono','Liberation Mono',monospace;color:#7c7c7c">51</div><div style="position:absolute;left:69.5px;top:314.3px;font:14px/19px 'DejaVu Sans Mono','Liberation Mono',monospace;letter-spacing:-0.03px;white-space:pre;color:#d4d4d4"><span style="color:#638f50">    // printf("This result is:%x\n", result);</span></div><div style="position:absolute;left:0;top:334.1px;width:42.5px;text-align:right;font:14px/19px 'DejaVu Sans Mono','Liberation Mono',monospace;color:#7c7c7c">52</div><div style="position:absolute;left:69.5px;top:333.3px;font:14px/19px 'DejaVu Sans Mono','Liberation Mono',monospace;letter-spacing:-0.03px;white-space:pre;color:#d4d4d4"><span style="color:#638f50"></span></div><div style="position:absolute;left:0;top:353.1px;width:42.5px;text-align:right;font:14px/19px 'DejaVu Sans Mono','Liberation Mono',monospace;color:#7c7c7c">53</div><div style="position:absolute;left:69.5px;top:352.3px;font:14px/19px 'DejaVu Sans Mono','Liberation Mono',monospace;letter-spacing:-0.03px;white-space:pre;color:#d4d4d4"><span style="color:#638f50">    // result = xori_ins(0xff);    //result = 0xff = 0xff ^ 0</span></div><div style="position:absolute;left:0;top:372.1px;width:42.5px;text-align:right;font:14px/19px 'DejaVu Sans Mono','Liberation Mono',monospace;color:#7c7c7c">54</div><div style="position:absolute;left:69.5px;top:371.3px;font:14px/19px 'DejaVu Sans Mono','Liberation Mono',monospace;letter-spacing:-0.03px;white-space:pre;color:#d4d4d4"><span style="color:#638f50">    // printf("This result is:%x\n", result);</span></div><div style="position:absolute;left:0;top:391.1px;width:42.5px;text-align:right;font:14px/19px 'DejaVu Sans Mono','Liberation Mono',monospace;color:#7c7c7c">55</div><div style="position:absolute;left:69.5px;top:390.3px;font:14px/19px 'DejaVu Sans Mono','Liberation Mono',monospace;letter-spacing:-0.03px;white-space:pre;color:#d4d4d4"><span style="color:#638f50">    // result = xor_ins(0xffff, 0xffff);    //result = 0 = 0xffff ^ 0xffff</span></div><div style="position:absolute;left:0;top:410.1px;width:42.5px;text-align:right;font:14px/19px 'DejaVu Sans Mono','Liberation Mono',monospace;color:#7c7c7c">56</div><div style="position:absolute;left:69.5px;top:409.3px;font:14px/19px 'DejaVu Sans Mono','Liberation Mono',monospace;letter-spacing:-0.03px;white-space:pre;color:#d4d4d4"><span style="color:#638f50">    // printf("This result is:%x\n", result);</span></div><div style="position:absolute;left:0;top:429.1px;width:42.5px;text-align:right;font:14px/19px 'DejaVu Sans Mono','Liberation Mono',monospace;color:#7c7c7c">57</div><div style="position:absolute;left:69.5px;top:428.3px;font:14px/19px 'DejaVu Sans Mono','Liberation Mono',monospace;letter-spacing:-0.03px;white-space:pre;color:#d4d4d4"><span style="color:#638f50"></span></div><div style="position:absolute;left:0;top:448.1px;width:42.5px;text-align:right;font:14px/19px 'DejaVu Sans Mono','Liberation Mono',monospace;color:#7c7c7c">58</div><div style="position:absolute;left:69.5px;top:447.3px;font:14px/19px 'DejaVu Sans Mono','Liberation Mono',monospace;letter-spacing:-0.03px;white-space:pre;color:#d4d4d4">    <span style="color:#9cdcfe">result</span><span style="color:#d4d4d4"> = </span><span style="color:#dcdcaa">slli_ins</span><span style="color:#d4d4d4">(</span><span style="color:#b5cea8">0xffff</span><span style="color:#d4d4d4">);</span>    <span style="color:#638f50">//result = 0xffff0 = 0xffff &lt;&lt; 4</span></div><div style="position:absolute;left:0;top:467.1px;width:42.5px;text-align:right;font:14px/19px 'DejaVu Sans Mono','Liberation Mono',monospace;color:#7c7c7c">59</div><div style="position:absolute;left:69.5px;top:466.3px;font:14px/19px 'DejaVu Sans Mono','Liberation Mono',monospace;letter-spacing:-0.03px;white-space:pre;color:#d4d4d4">    <span style="color:#dcdcaa">printf</span><span style="color:#d4d4d4">(</span><span style="color:#ce9178">"This result is:</span><span style="color:#9cdcfe">%x</span><span style="color:#d7ba7d">\n</span><span style="color:#ce9178">"</span><span style="color:#d4d4d4">, </span><span style="color:#9cdcfe">result</span><span style="color:#d4d4d4">);</span></div><div style="position:absolute;left:0;top:486.1px;width:42.5px;text-align:right;font:14px/19px 'DejaVu Sans Mono','Liberation Mono',monospace;color:#7c7c7c">60</div><div style="position:absolute;left:69.5px;top:485.3px;font:14px/19px 'DejaVu Sans Mono','Liberation Mono',monospace;letter-spacing:-0.03px;white-space:pre;color:#d4d4d4">    <span style="color:#9cdcfe">result</span><span style="color:#d4d4d4"> = </span><span style="color:#dcdcaa">sll_ins</span><span style="color:#d4d4d4">(</span><span style="color:#b5cea8">0xeeeeeeee</span><span style="color:#d4d4d4">, </span><span style="color:#b5cea8">31</span><span style="color:#d4d4d4">);</span>    <span style="color:#638f50">//result = 0 = 0xeeeeeeee &lt;&lt; 31</span></div><div style="position:absolute;left:0;top:505.1px;width:42.5px;text-align:right;font:14px/19px 'DejaVu Sans Mono','Liberation Mono',monospace;color:#7c7c7c">61</div><div style="position:absolute;left:69.5px;top:504.3px;font:14px/19px 'DejaVu Sans Mono','Liberation Mono',monospace;letter-spacing:-0.03px;white-space:pre;color:#d4d4d4">    <span style="color:#dcdcaa">printf</span><span style="color:#d4d4d4">(</span><span style="color:#ce9178">"This result is:</span><span style="color:#9cdcfe">%x</span><span style="color:#d7ba7d">\n</span><span style="color:#ce9178">"</span><span style="color:#d4d4d4">, </span><span style="color:#9cdcfe">result</span><span style="color:#d4d4d4">);</span></div><div style="position:absolute;left:0;top:524.0999999999999px;width:42.5px;text-align:right;font:14px/19px 'DejaVu Sans Mono','Liberation Mono',monospace;color:#c0c0c0">62</div><div style="position:absolute;left:69.5px;top:523.3px;font:14px/19px 'DejaVu Sans Mono','Liberation Mono',monospace;letter-spacing:-0.03px;white-space:pre;color:#d4d4d4">    <span style="color:#c586c0">return</span> <span style="color:#b5cea8">0</span><span style="color:#d4d4d4">;</span></div><div style="position:absolute;left:0;top:543.0999999999999px;width:42.5px;text-align:right;font:14px/19px 'DejaVu Sans Mono','Liberation Mono',monospace;color:#7c7c7c">63</div><div style="position:absolute;left:69.5px;top:542.3px;font:14px/19px 'DejaVu Sans Mono','Liberation Mono',monospace;letter-spacing:-0.03px;white-space:pre;color:#d4d4d4"><span style="color:#d4d4d4">}</span></div><div style="position:absolute;left:5.100000000000023px;top:451.7px;width:8.8px;height:8.8px;background:#e51400;border-radius:50%"></div><div style="position:absolute;left:5.100000000000023px;top:489.7px;width:8.8px;height:8.8px;background:#e51400;border-radius:50%"></div><svg viewBox="0 0 16 16" width="16" height="16" style="position:absolute;color:#ffcc00;left:1.7999999999999545px;top:524.2px;" fill="none" stroke="currentColor"><path d="M2.6 2.8 H9.2 L13.6 8.2 L9.2 13.6 H2.6 Z" stroke-width="1.9" stroke-linejoin="round"/></svg><svg width="100" height="130" viewBox="0 0 100 130" style="position:absolute;left:1266.5px;top:0;opacity:0.5" fill="none" stroke-width="1.5"><path d="M0 1h8M2.8 123h6" stroke="#c586c0"/><path d="M9 1h9M8.8 117h6M15.8 117h6M22.8 117h9M8.8 121h6M15.8 121h6M22.8 121h9" stroke="#ce9178"/><path d="M0 3h6M0 5h6M0 7h6M0 9h6M0 11h6M0 13h6M0 15h6M0 17h6M0 19h6M0 21h6M0 23h6M0 25h6M0 27h6M0 29h6M0 31h6M0 33h6M0 35h6" stroke="#d7ba7d"/><path d="M8 3h3M12 3h3M8 5h3M12 5h3M8 7h3M12 7h3M8 9h3M12 9h3M8 11h3M12 11h3M8 13h3M12 13h3M8 15h3M12 15h3M8 17h3M12 17h3M8 19h3M12 19h3M8 21h3M12 21h3M8 23h3M12 23h3M8 25h3M12 25h3M8 27h3M12 27h3M8 29h3M12 29h3M8 31h3M12 31h3M8 33h3M12 33h3M8 35h3M12 35h3M0 37h3M2.8 41h3" stroke="#569cd6"/><path d="M16 3h2M16 5h2M16 7h2M16 9h2M16 11h2M16 13h2M16 15h2M16 17h2M16 19h2M16 21h2M16 23h2M16 25h2M16 27h2M16 29h2M16 31h2M16 33h2M16 35h2" stroke="#b0b0b0"/><path d="M19 3h8M28 3h5M34 3h5M40 3h6M47 3h6M54 3h3M19 5h8M28 5h5M34 5h7M42 5h6M49 5h3M19 7h7M27 7h4M32 7h3M36 7h2M39 7h6M19 9h9M29 9h2M32 9h6M39 9h5M45 9h5M51 9h7M59 9h2M19 11h9M29 11h3M33 11h6M40 11h2M43 11h6M50 11h2M53 11h2M19 13h5M25 13h3M29 13h6M36 13h2M39 13h5M19 15h7M27 15h6M34 15h3M38 15h6M45 15h3M49 15h7M19 17h7M27 17h2M30 17h7M38 17h2M41 17h5M47 17h7M19 19h7M27 19h6M34 19h2M37 19h7M45 19h4M50 19h4M19 21h8M28 21h4M33 21h2M36 21h2M39 21h6M19 23h7M27 23h2M30 23h4M35 23h5M41 23h2M19 25h9M29 25h2M32 25h3M36 25h3M40 25h2M19 27h7M27 27h7M35 27h5M41 27h5M47 27h2M50 27h6M19 29h5M25 29h7M33 29h4M38 29h4M43 29h2M46 29h4M51 29h4M19 31h7M27 31h2M30 31h3M34 31h3M38 31h7M19 33h4M24 33h2M27 33h5M33 33h5M39 33h3M19 35h8M28 35h3M32 35h5M38 35h6M45 35h3M49 35h7M57 35h3M2.8 43h2M5.8 43h6M12.8 43h1M14.8 43h10M25.8 43h3M32.8 43h8M41.8 43h1M43.8 43h1M45.8 43h1M47.8 43h4M52.8 43h1M54.8 43h2M2.8 45h2M5.8 45h12M18.8 45h6M25.8 45h9M35.8 45h8M2.8 47h2M5.8 47h6M12.8 47h1M14.8 47h12M27.8 47h3M34.8 47h8M43.8 47h1M45.8 47h1M47.8 47h1M49.8 47h17M67.8 47h1M69.8 47h2M2.8 49h2M5.8 49h12M18.8 49h6M25.8 49h9M35.8 49h8M2.8 53h2M5.8 53h6M12.8 53h1M14.8 53h12M30.8 53h8M39.8 53h1M41.8 53h1M43.8 53h1M45.8 53h1M47.8 53h1M49.8 53h4M2.8 55h2M5.8 55h12M18.8 55h6M25.8 55h9M35.8 55h8M2.8 57h2M5.8 57h6M12.8 57h1M14.8 57h17M35.8 57h8M44.8 57h1M46.8 57h4M51.8 57h1M53.8 57h6M60.8 57h1M62.8 57h4M2.8 59h2M5.8 59h12M18.8 59h6M25.8 59h9M35.8 59h8M2.8 63h2M5.8 63h6M12.8 63h1M14.8 63h15M33.8 63h8M42.8 63h1M44.8 63h4M49.8 63h1M51.8 63h4M56.8 63h1M58.8 63h1M2.8 67h2M5.8 67h6M12.8 67h1M14.8 67h10M25.8 67h3M32.8 67h8M41.8 67h1M43.8 67h1M45.8 67h1M47.8 67h4M52.8 67h1M54.8 67h2M2.8 69h2M5.8 69h12M18.8 69h6M25.8 69h9M35.8 69h8M2.8 71h2M5.8 71h6M12.8 71h1M14.8 71h12M27.8 71h3M34.8 71h8M43.8 71h1M45.8 71h1M47.8 71h1M49.8 71h17M67.8 71h1M69.8 71h2M2.8 73h2M5.8 73h12M18.8 73h6M25.8 73h9M35.8 73h8M2.8 77h2M5.8 77h6M12.8 77h1M14.8 77h12M30.8 77h8M39.8 77h1M41.8 77h1M43.8 77h1M45.8 77h1M47.8 77h1M49.8 77h4M2.8 79h2M5.8 79h12M18.8 79h6M25.8 79h9M35.8 79h8M2.8 81h2M5.8 81h6M12.8 81h1M14.8 81h17M35.8 81h8M44.8 81h1M46.8 81h4M51.8 81h1M53.8 81h6M60.8 81h1M62.8 81h4M2.8 83h2M5.8 83h12M18.8 83h6M25.8 83h9M35.8 83h8M2.8 85h2M5.8 85h6M12.8 85h1M14.8 85h10M25.8 85h3M32.8 85h8M41.8 85h1M43.8 85h1M45.8 85h1M47.8 85h1M49.8 85h1M51.8 85h1M2.8 87h2M5.8 87h12M18.8 87h6M25.8 87h9M35.8 87h8M2.8 89h2M5.8 89h6M12.8 89h1M14.8 89h10M25.8 89h3M32.8 89h8M41.8 89h1M43.8 89h1M45.8 89h1M47.8 89h1M49.8 89h1M51.8 89h1M2.8 91h2M5.8 91h12M18.8 91h6M25.8 91h9M35.8 91h8M2.8 95h2M5.8 95h6M12.8 95h1M14.8 95h16M34.8 95h8M43.8 95h1M45.8 95h6M52.8 95h1M54.8 95h6M61.8 95h1M63.8 95h1M2.8 97h2M5.8 97h12M18.8 97h6M25.8 97h9M35.8 97h8M2.8 99h2M5.8 99h6M12.8 99h1M14.8 99h14M29.8 99h8M41.8 99h8M50.8 99h1M52.8 99h6M59.8 99h1M61.8 99h6M68.8 99h1M70.8 99h6M2.8 101h2M5.8 101h12M18.8 101h6M25.8 101h9M35.8 101h8M2.8 105h2M5.8 105h6M12.8 105h1M14.8 105h15M33.8 105h8M42.8 105h1M44.8 105h4M49.8 105h1M51.8 105h4M56.8 105h1M58.8 105h1M2.8 107h2M5.8 107h12M18.8 107h6M25.8 107h9M35.8 107h8M2.8 109h2M5.8 109h6M12.8 109h1M14.8 109h15M30.8 109h8M42.8 109h8M51.8 109h1M53.8 109h1M55.8 109h1M57.8 109h6M64.8 109h1M66.8 109h6M2.8 111h2M5.8 111h12M18.8 111h6M25.8 111h9M35.8 111h8M32.8 115h8M41.8 115h1M43.8 115h7M51.8 115h1M53.8 115h6M60.8 115h2M63.8 115h1M39.8 119h8M48.8 119h1M50.8 119h1M52.8 119h1M54.8 119h10M65.8 119h2M68.8 119h2" stroke="#6a9955"/><path d="M4 37h4M11.8 115h8M2.8 117h6M11.8 119h7M2.8 121h6" stroke="#dcdcaa"/><path d="M8 37h2M0 39h1M13.8 41h1M9.8 115h1M9.8 119h1M0 125h1" stroke="#d4d4d4"/><path d="M6.8 41h6M2.8 115h6M32.8 117h8M2.8 119h6M32.8 121h8" stroke="#9cdcfe"/><path d="M15.8 41h2M19.8 115h9M18.8 119h12M31.8 119h4M9.8 123h2" stroke="#b5cea8"/></svg><div style="position:absolute;left:1263.0px;top:0px;width:2.6px;height:36px;background:#31679c;"></div><div style="position:absolute;left:1263.0px;top:122px;width:111.5px;height:2px;background:#2b4a6d;"></div><div style="position:absolute;left:1374.5px;top:0px;width:1px;height:579.5px;background:#353535;"></div><div style="position:absolute;left:1375.0px;top:380.5px;width:13.5px;height:2.5px;background:#bfbf9a;"></div><div style="position:absolute;left:1375.0px;top:383px;width:13.5px;height:5px;background:#5a5a1c;"></div><div style="position:absolute;left:0px;top:0px;width:1254.1px;height:6px;background:linear-gradient(#000000cc,#00000000)"></div></div>
<div style="position:absolute;left:531.5px;top:701.2px;width:1388.5px;height:285.29999999999995px;background:#1e1e1e;"></div>
<div style="position:absolute;left:531.5px;top:701.2px;width:1388.5px;height:1px;background:#454545;"></div>
<div style="position:absolute;left:551px;top:702.2px;font:11px/35px 'Noto Sans CJK SC','Liberation Sans',sans-serif;color:#8f8f8f;white-space:pre;">问题</div>
<div style="position:absolute;left:596px;top:702.2px;font:11px/35px 'Noto Sans CJK SC','Liberation Sans',sans-serif;color:#8f8f8f;white-space:pre;">输出</div>
<div style="position:absolute;left:642.5px;top:702.2px;font:11px/35px 'Noto Sans CJK SC','Liberation Sans',sans-serif;color:#8f8f8f;white-space:pre;">调试控制台</div>
<div style="position:absolute;left:721.5px;top:702.2px;font:11px/35px 'Noto Sans CJK SC','Liberation Sans',sans-serif;color:#e7e7e7;white-space:pre;">终端</div>
<div style="position:absolute;left:721.5px;top:730.7px;width:22.5px;height:1px;background:#e7e7e7;"></div>
<svg viewBox="0 0 16 16" width="16" height="16" style="position:absolute;color:#c5c5c5;left:1831.3px;top:711.5px;" fill="none" stroke="currentColor"><path d="M8 2.5 V13.5 M2.5 8 H13.5" stroke-width="1.1"/></svg>
<svg viewBox="0 0 16 16" width="10" height="10" style="position:absolute;color:#c5c5c5;left:1851.3px;top:715.2px;" fill="none" stroke="currentColor"><path d="M3.2 5.8 L8 10.6 L12.8 5.8" stroke-width="1.1"/></svg>
<svg viewBox="0 0 16 16" width="16" height="16" style="position:absolute;color:#c5c5c5;left:1871px;top:711.2px;" fill="none" stroke="currentColor"><path d="M3.2 10.4 L8 5.6 L12.8 10.4" stroke-width="1.1"/></svg>
<svg viewBox="0 0 16 16" width="16" height="16" style="position:absolute;color:#c5c5c5;left:1893px;top:711.7px;" fill="none" stroke="currentColor"><path d="M3.8 3.8 L12.2 12.2 M12.2 3.8 L3.8 12.2" stroke-width="1.1"/></svg>
<div style="position:absolute;left:1718.5px;top:736.5px;width:1px;height:250.0px;background:#343434;"></div>
<svg viewBox="0 0 16 16" width="16" height="16" style="position:absolute;color:#cccccc;left:1728.7px;top:740px;" fill="none" stroke="currentColor"><rect x="1.5" y="2" width="13" height="12" rx="0.8" stroke-width="1"/><path d="M5 5.2 L8.4 8 L5 10.8" stroke-width="1.1"/></svg>
<div style="position:absolute;left:1748.4px;top:737px;font:13px/22px 'Noto Sans CJK SC','Liberation Sans',sans-serif;color:#cccccc;white-space:pre;">bash</div>
<div style="position:absolute;left:1719.5px;top:759px;width:200.5px;height:22px;background:#37373d;"></div>
<svg viewBox="0 0 16 16" width="16" height="16" style="position:absolute;color:#cccccc;left:1729.5px;top:762px;" fill="none" stroke="currentColor"><g stroke-width="2.1" stroke-linecap="round"><path d="M5.2 5.4 L12.6 13"/><path d="M10.6 5.6 L3.4 13"/></g><path d="M5.6 2.2 A2.6 2.6 0 1 0 5.9 5.9" stroke-width="1.7" stroke-linecap="round"/><path d="M10.4 5.8 L11.2 2.6 L13.6 1.8 L14.4 2.8 L13.4 5 Z" fill="currentColor" stroke-width="0.8" stroke-linejoin="round"/></svg>
<div style="position:absolute;left:1749px;top:759px;font:13px/22px 'Noto Sans CJK SC','Liberation Sans',sans-serif;color:#e0e0e0;white-space:pre;">Run RISCV-QEMU</div>
<div style="position:absolute;left:1857.5px;top:759px;font:12px/23px 'Noto Sans CJK SC','Liberation Sans',sans-serif;color:#a6a6a6;white-space:pre;">Task</div>
<svg viewBox="0 0 16 16" width="16" height="16" style="position:absolute;color:#a0a0a0;left:1895px;top:762px;" fill="none" stroke="currentColor"><path d="M2.5 8.8 L6 12.2 L13.8 3.6" stroke-width="1.1"/></svg>
<div style="position:absolute;left:551px;top:744.3px;font:14px/16px 'DejaVu Sans Mono','Liberation Mono',monospace;letter-spacing:-0.43px;color:#cccccc;white-space:pre;"><span>CC -[M] </span><span style="font-family:'Noto Sans Mono CJK SC','Noto Sans CJK SC',sans-serif;letter-spacing:2px">正在构建</span><span>... addsub.o</span></div>
<div style="position:absolute;left:551px;top:760.39px;font:14px/16px 'DejaVu Sans Mono','Liberation Mono',monospace;letter-spacing:-0.43px;color:#cccccc;white-space:pre;"><span>CC -[M] </span><span style="font-family:'Noto Sans Mono CJK SC','Noto Sans CJK SC',sans-serif;letter-spacing:2px">正在构建</span><span>... sll.o</span></div>
<div style="position:absolute;left:551px;top:776.4799999999999px;font:14px/16px 'DejaVu Sans Mono','Liberation Mono',monospace;letter-spacing:-0.43px;color:#cccccc;white-space:pre;"><span>CC -[M] </span><span style="font-family:'Noto Sans Mono CJK SC','Noto Sans CJK SC',sans-serif;letter-spacing:2px">正在构建</span><span>... and.o</span></div>
<div style="position:absolute;left:551px;top:792.5699999999999px;font:14px/16px 'DejaVu Sans Mono','Liberation Mono',monospace;letter-spacing:-0.43px;color:#cccccc;white-space:pre;"><span>CC -[M] </span><span style="font-family:'Noto Sans Mono CJK SC','Noto Sans CJK SC',sans-serif;letter-spacing:2px">正在构建</span><span>... addi.o</span></div>
<div style="position:absolute;left:551px;top:808.66px;font:14px/16px 'DejaVu Sans Mono','Liberation Mono',monospace;letter-spacing:-0.43px;color:#cccccc;white-space:pre;"><span>CC -[M] </span><span style="font-family:'Noto Sans Mono CJK SC','Noto Sans CJK SC',sans-serif;letter-spacing:2px">正在构建</span><span>... slti.o</span></div>
<div style="position:absolute;left:551px;top:824.75px;font:14px/16px 'DejaVu Sans Mono','Liberation Mono',monospace;letter-spacing:-0.43px;color:#cccccc;white-space:pre;"><span>CC -[M] </span><span style="font-family:'Noto Sans Mono CJK SC','Noto Sans CJK SC',sans-serif;letter-spacing:2px">正在构建</span><span>... main.o</span></div>
<div style="position:absolute;left:551px;top:855.3299999999999px;font:14px/16px 'DejaVu Sans Mono','Liberation Mono',monospace;letter-spacing:-0.43px;color:#e5e5e5;white-space:pre;font-weight:bold;"><span style="font-family:'Noto Sans Mono CJK SC','Noto Sans CJK SC',sans-serif;letter-spacing:2px">终端将被任务重用，按任意键关闭。</span></div>
<div style="position:absolute;left:551px;top:889.1099999999999px;font:14px/16px 'DejaVu Sans Mono','Liberation Mono',monospace;letter-spacing:-0.43px;color:#e5e5e5;white-space:pre;font-weight:bold;"><span>&gt; Executing task: echo Starting RISCV-QEMU&amp;qemu-riscv32 -g 1234 ./*.elf &lt;</span></div>
<div style="position:absolute;left:551px;top:921.29px;font:14px/16px 'DejaVu Sans Mono','Liberation Mono',monospace;letter-spacing:-0.43px;color:#cccccc;white-space:pre;"><span>Starting RISCV-QEMU</span></div>
<div style="position:absolute;left:551px;top:937.3799999999999px;font:14px/16px 'DejaVu Sans Mono','Liberation Mono',monospace;letter-spacing:-0.43px;color:#cccccc;white-space:pre;"><span>This result is:ffff0</span></div>
<div style="position:absolute;left:551px;top:953.4699999999999px;font:14px/16px 'DejaVu Sans Mono','Liberation Mono',monospace;letter-spacing:-0.43px;color:#cccccc;white-space:pre;"><span>This result is:0</span></div>
<div style="position:absolute;left:0px;top:986.2px;width:1920px;height:23px;background:#cc6633;"></div>
<div style="position:absolute;left:0px;top:986.2px;width:34px;height:23px;background:#16825d;"></div>
<svg viewBox="0 0 16 16" width="16" height="16" style="position:absolute;color:#ffffff;left:9px;top:989.2px;" fill="none" stroke="currentColor"><path d="M3.4 6.2 L6.8 9.4 L3.4 12.8" stroke-width="1.15"/><path d="M11.8 2.8 L8.4 6.2 L11.6 9.4" stroke-width="1.15"/></svg>
<svg viewBox="0 0 16 16" width="15" height="15" style="position:absolute;color:#ffffff;left:40.5px;top:989.7px;" fill="none" stroke="currentColor"><circle cx="8" cy="8" r="6" stroke-width="1"/><path d="M5.6 5.6 L10.4 10.4 M10.4 5.6 L5.6 10.4" stroke-width="1"/></svg>
<div style="position:absolute;left:58.5px;top:986.2px;font:12px/22px 'Noto Sans CJK SC','Liberation Sans',sans-serif;color:#ffffff;white-space:pre;">0</div>
<svg viewBox="0 0 16 16" width="15" height="15" style="position:absolute;color:#ffffff;left:67px;top:989.7px;" fill="none" stroke="currentColor"><path d="M8 2.2 L14.3 13.5 H1.7 Z" stroke-width="1" stroke-linejoin="round"/><path d="M8 6.2 V10" stroke-width="1"/><circle cx="8" cy="11.7" r="0.6" fill="currentColor" stroke="none"/></svg>
<div style="position:absolute;left:84.5px;top:986.2px;font:12px/22px 'Noto Sans CJK SC','Liberation Sans',sans-serif;color:#ffffff;white-space:pre;">0</div>
<svg viewBox="0 0 16 16" width="15" height="15" style="position:absolute;color:#ffffff;left:106.5px;top:989.7px;" fill="none" stroke="currentColor"><g stroke-width="2.1" stroke-linecap="round"><path d="M5.2 5.4 L12.6 13"/><path d="M10.6 5.6 L3.4 13"/></g><path d="M5.6 2.2 A2.6 2.6 0 1 0 5.9 5.9" stroke-width="1.7" stroke-linecap="round"/><path d="M10.4 5.8 L11.2 2.6 L13.6 1.8 L14.4 2.8 L13.4 5 Z" fill="currentColor" stroke-width="0.8" stroke-linejoin="round"/></svg>
<div style="position:absolute;left:124px;top:986.2px;font:12px/22px 'Noto Sans CJK SC','Liberation Sans',sans-serif;color:#ffffff;white-space:pre;">1</div>
<svg viewBox="0 0 16 16" width="15.5" height="15.5" style="position:absolute;color:#ffffff;left:145px;top:989.7px;" fill="none" stroke="currentColor"><path d="M6.5 6.4 V2.5 L13.8 7.2 L9.6 10" stroke-width="1.25" stroke-linejoin="round"/><rect x="3.2" y="8.8" width="4.8" height="4.8" rx="1.6" stroke-width="1.3"/><path d="M4.2 8.8 Q5.6 6.4 7 8.8" stroke-width="1.1"/><path d="M1.8 10.4 H3.2 M1.8 12.8 H3.2 M8 10.4 H9.4 M8 12.8 H9.4" stroke-width="0.9"/></svg>
<div style="position:absolute;left:163.5px;top:986.2px;font:12px/22px 'Noto Sans CJK SC','Liberation Sans',sans-serif;color:#ffffff;white-space:pre;">(gdb) 启动 (16)</div>
<div style="position:absolute;left:1582.5px;top:986.2px;font:12px/22px 'Noto Sans CJK SC','Liberation Sans',sans-serif;color:#ffffff;white-space:pre;">行 62，列 1</div>
<div style="position:absolute;left:1659.5px;top:986.2px;font:12px/22px 'Noto Sans CJK SC','Liberation Sans',sans-serif;color:#ffffff;white-space:pre;">空格: 4</div>
<div style="position:absolute;left:1712.5px;top:986.2px;font:12px/22px 'Noto Sans CJK SC','Liberation Sans',sans-serif;color:#ffffff;white-space:pre;">UTF-8</div>
<div style="position:absolute;left:1761.5px;top:986.2px;font:12px/22px 'Noto Sans CJK SC','Liberation Sans',sans-serif;color:#ffffff;white-space:pre;">LF</div>
<div style="position:absolute;left:1791px;top:986.2px;font:12px/22px 'Noto Sans CJK SC','Liberation Sans',sans-serif;color:#ffffff;white-space:pre;">C</div>
<div style="position:absolute;left:1814.5px;top:986.2px;font:12px/22px 'Noto Sans CJK SC','Liberation Sans',sans-serif;color:#ffffff;white-space:pre;">Linux</div>
<svg viewBox="0 0 16 16" width="15" height="15" style="position:absolute;color:#ffffff;left:1859.5px;top:989.7px;" fill="none" stroke="currentColor"><circle cx="5.6" cy="6" r="2.2" stroke-width="1"/><path d="M1.8 13.5 Q2 9.6 5.6 9.6 Q7.4 9.6 8.4 10.8" stroke-width="1"/><path d="M7 2.5 H14.2 V8.8 H11.5 L9.5 10.8 V8.8" stroke-width="1" stroke-linejoin="round"/></svg>
<svg viewBox="0 0 16 16" width="15" height="15" style="position:absolute;color:#ffffff;left:1890px;top:989.7px;" fill="none" stroke="currentColor"><path d="M8.6 2.4 Q4.2 2.2 4.2 6.8 V10 L2.8 12 H13 L11.8 10 V8.6" stroke-width="1" stroke-linejoin="round"/><path d="M6.4 12.4 Q8 14.8 9.6 12.4" stroke-width="1"/><circle cx="12" cy="4.2" r="2.4" fill="currentColor" stroke="none"/></svg>
</div>
<div class="rr" style="left:536.3px;top:610px;width:755px;height:41.4px"></div>
<div class="rr" style="left:535.3px;top:935px;width:747px;height:49.5px"></div>
</body></html>
